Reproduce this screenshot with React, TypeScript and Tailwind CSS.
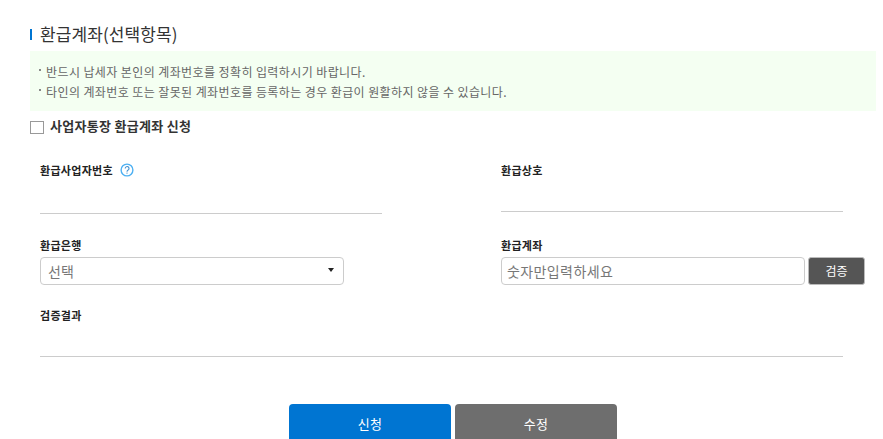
import React from 'react';

const font = 'font-["Noto_Sans_CJK_KR","Noto_Sans",sans-serif]';

function FieldLabel({ children }: { children: React.ReactNode }) {
  return <div className="text-[11px] leading-[14px] font-bold tracking-[0.3px] text-[#222]">{children}</div>;
}

function NoticeLine({ children }: { children: React.ReactNode }) {
  return (
    <p>
      <span className="mr-[5px] inline-block h-[2px] w-[2px] bg-[#888] align-[6px]" />
      {children}
    </p>
  );
}

export default function App() {
  return (
    <div className={`h-[439px] w-[883px] overflow-hidden bg-white pt-[24px] pl-[30px] ${font}`}>
      {/* Section title */}
      <div className="flex h-[20px] items-center">
        <span className="h-[11px] w-[2px] bg-[#0075d2]" />
        <h2 className="ml-[8px] text-[17px] leading-[20px] font-normal tracking-[0.1px] text-[#333]">환급계좌(선택항목)</h2>
      </div>

      {/* Notice */}
      <div className="mt-[7px] h-[60px] w-[846px] bg-[#f4fff2] pt-[11px] pl-[9px] text-[12px] leading-[20px] tracking-[0.4px] text-[#666]">
        <NoticeLine>반드시 납세자 본인의 계좌번호를 정확히 입력하시기 바랍니다.</NoticeLine>
        <NoticeLine>타인의 계좌번호 또는 잘못된 계좌번호를 등록하는 경우 환급이 원활하지 않을 수 있습니다.</NoticeLine>
      </div>

      <label className="mt-[9px] flex h-[14px] items-center">
        <span className="h-[13px] w-[14px] border border-[#999] bg-white" />
        <span className="ml-[6px] pb-[2px] text-[13px] font-bold tracking-[0.3px] text-[#333]">사업자통장 환급계좌 신청</span>
      </label>

      {/* Form */}
      <div className="mt-[29px] pl-[10px]">
        <div className="flex">
          <div className="w-[342px]">
            <div className="flex h-[14px] items-center">
              <FieldLabel>환급사업자번호</FieldLabel>
              <svg className="ml-[7px]" width="14" height="14" viewBox="0 0 14 14" fill="none">
                <circle cx="7" cy="7" r="5.9" stroke="#4db0f2" strokeWidth="1.4" />
                <path d="M5.2 5.5a1.9 1.9 0 1 1 2.9 1.6c-.7.4-1.1.8-1.1 1.6" stroke="#3f8fd0" strokeWidth="1.1" />
                <rect x="6.5" y="9.6" width="1" height="1.1" fill="#3f8fd0" />
              </svg>
            </div>
            <div className="mt-[36px] border-b border-[#ccc]" />
          </div>
          <div className="ml-[119px] w-[342px]">
            <FieldLabel>환급상호</FieldLabel>
            <div className="mt-[34px] border-b border-[#ccc]" />
          </div>
        </div>

        <div className="mt-[24px] flex">
          <div className="w-[342px]">
            <FieldLabel>환급은행</FieldLabel>
            <div className="mt-[5px] flex h-[28px] w-[304px] items-center justify-between rounded-[4px] border border-[#ccc] pr-[9px] pl-[7px] text-[14px] text-[#777]">
              <span>선택</span>
              <span className="mb-[2px] h-0 w-0 border-x-[3px] border-t-[4px] border-x-transparent border-t-[#222]" />
            </div>
          </div>
          <div className="ml-[119px]">
            <FieldLabel>환급계좌</FieldLabel>
            <div className="mt-[5px] flex gap-[3px]">
              <div className="flex h-[28px] w-[304px] items-center rounded-[4px] border border-[#ccc] pl-[5px] text-[14px] tracking-[0.4px] text-[#777]">
                숫자만입력하세요
              </div>
              <button className="h-[28px] w-[57px] rounded-[3px] border border-[#bbb] bg-[#555] text-[12px] text-white">검증</button>
            </div>
          </div>
        </div>

        <div className="mt-[23px] w-[803px]">
          <FieldLabel>검증결과</FieldLabel>
          <div className="mt-[34px] border-b border-[#ccc]" />
        </div>
      </div>

      {/* Actions */}
      <div className="mt-[47px] ml-[259px] flex gap-[4px]">
        <button className="h-[60px] w-[162px] rounded-t-[4px] bg-[#0075d2] pb-[20px] text-[13px] tracking-[0.3px] text-white">신청</button>
        <button className="h-[60px] w-[162px] rounded-t-[4px] bg-[#6e6e6e] pb-[20px] text-[13px] tracking-[0.3px] text-white">수정</button>
      </div>
    </div>
  );
}
